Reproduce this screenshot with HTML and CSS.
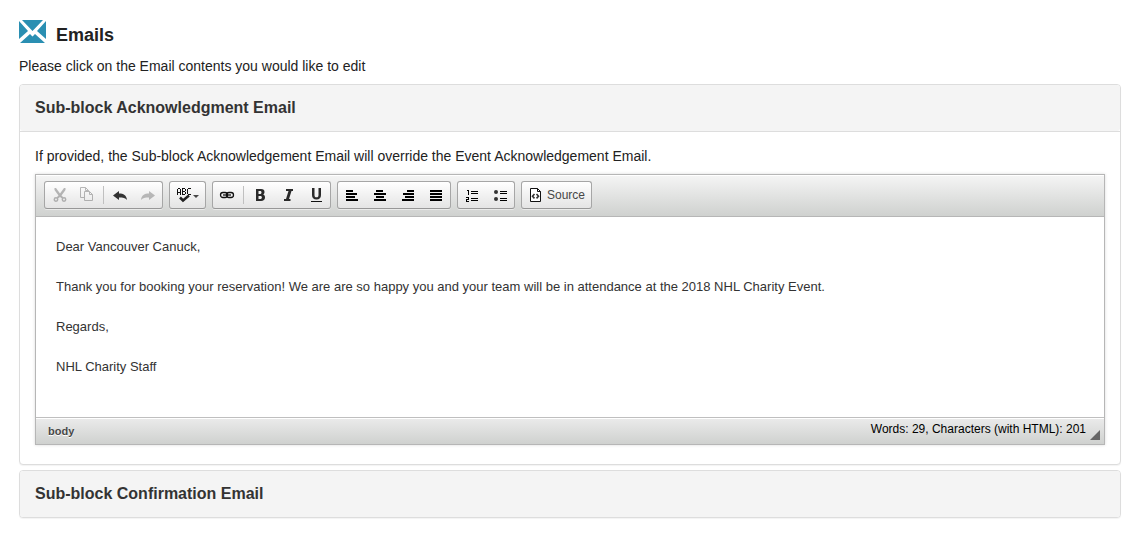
FILE: index.html
```html
<!DOCTYPE html>
<html lang="en">
<head>
    <meta charset="UTF-8">
    <meta name="viewport" content="width=device-width, initial-scale=1.0">
    <title>Emails</title>
    <link rel="stylesheet" href="styles.css">
</head>
<body>
    <header class="page-header">
        <svg class="mail-icon" width="28" height="24" viewBox="0 0 28 24" aria-hidden="true">
            <path fill="#2a8fb2" d="M4 0h21L14.500 11zM1 1l9 10-9 8zM28 1l-9 10 9 8zM2 23l10-9 2.500 2.500L17 14l10 9z"/>
        </svg>
        <h1 class="page-title">Emails</h1>
    </header>
    <p class="intro">Please click on the Email contents you would like to edit</p>

    <section class="panel">
        <h2 class="panel-heading"><button type="button" class="panel-toggle" aria-expanded="true">Sub-block Acknowledgment Email</button></h2>
        <div class="panel-body">
            <p class="hint">If provided, the Sub-block Acknowledgement Email will override the Event Acknowledgement Email.</p>
            <div class="editor">
                <div class="toolbar" role="toolbar" aria-label="Editor toolbar">
                    <div class="tool-group">
                        <button type="button" class="tool" aria-label="Cut" disabled>
                            <svg width="16" height="16" viewBox="0 0 16 16">
                                <path fill="#222" d="M3.500 1h1.500l4 5.500L13 1h1.500v2L10.500 8.500l2 2-1.500 1-2-1.500-2 1.500-1.500-1 2-2L3.500 3z"/>
                                <circle cx="5" cy="12.500" r="1.700" fill="none" stroke="#222" stroke-width="1.500"/>
                                <circle cx="13" cy="12.500" r="1.700" fill="none" stroke="#222" stroke-width="1.500"/>
                            </svg>
                        </button>
                        <button type="button" class="tool" aria-label="Copy" disabled>
                            <svg width="16" height="16" viewBox="0 0 16 16" fill="none" stroke="#222">
                                <path d="M5.500 10.500h-4v-10h5l3 3v1M6.500 .5v3h3"/>
                                <path d="M5.500 4.500h5l3 3v6h-8zM10.500 4.500v3h3"/>
                            </svg>
                        </button>
                        <span class="separator"></span>
                        <button type="button" class="tool" aria-label="Undo">
                            <svg width="16" height="16" viewBox="0 0 16 16"><path fill="#333" d="M1 8.500L7 4v2.500c4.500 0 7.500 1.500 8 6.500-1.500-2-4-2.500-8-2.500V13z"/></svg>
                        </button>
                        <button type="button" class="tool" aria-label="Redo" disabled>
                            <svg width="16" height="16" viewBox="0 0 16 16"><path fill="#333" d="M15 8.500L9 4v2.500c-4.500 0-7.500 1.500-8 6.500 1.500-2 4-2.500 8-2.500V13z"/></svg>
                        </button>
                    </div>
                    <div class="tool-group">
                        <button type="button" class="tool tool-menu" aria-label="Spell check as you type">
                            <svg width="16" height="16" viewBox="0 0 16 16">
                                <path fill="#111" shape-rendering="crispEdges" d="M2 1h2v1H2zM1 2h1v6H1zM4 2h1v6H4zM2 5h2v1H2zM6 1h3v1H6zM6 2h1v6H6zM9 2h1v2H9zM7 4h2v1H7zM9 5h1v2H9zM7 7h2v1H7zM12 1h3v1h-3zM11 2h1v5h-1zM12 7h3v1h-3z"/>
                                <path fill="none" stroke="#222" stroke-width="2.500" d="M4 10.500l3 3 6-5"/>
                            </svg>
                            <span class="arrow"></span>
                        </button>
                    </div>
                    <div class="tool-group">
                        <button type="button" class="tool" aria-label="Link">
                            <svg width="16" height="16" viewBox="0 0 16 16" fill="none" stroke="#111">
                                <rect x="1.500" y="5.500" width="7" height="5" rx="2.500" stroke-width="1.300"/>
                                <rect x="7.500" y="5.500" width="7" height="5" rx="2.500" stroke-width="1.300"/>
                                <path stroke-width="1.300" d="M4 8h8"/>
                            </svg>
                        </button>
                        <span class="separator"></span>
                        <button type="button" class="tool" aria-label="Bold">
                            <svg width="16" height="16" viewBox="0 0 16 16"><path fill="#2a2a2a" fill-rule="evenodd" d="M4 2h5c2.500 0 3.500 1.200 3.500 3 0 1.500-.8 2.300-1.500 2.600 1.300.3 2 1.300 2 2.900 0 2.200-1.500 3.500-4 3.500H4zM6.500 4v3H8c1.200 0 1.500-.7 1.500-1.500S9.200 4 8 4zM6.500 9v3h1.700c1.200 0 1.700-.6 1.700-1.500S9.500 9 8.200 9z"/></svg>
                        </button>
                        <button type="button" class="tool" aria-label="Italic">
                            <svg width="16" height="16" viewBox="0 0 16 16"><path fill="#2a2a2a" d="M6 2h7v2h-1.500L9 12h1.500v2H4v-2h2L8.500 4H6z"/></svg>
                        </button>
                        <button type="button" class="tool" aria-label="Underline">
                            <svg width="16" height="16" viewBox="0 0 16 16"><path fill="#2a2a2a" d="M4 1h2.500v7c0 1.700.5 2.300 2 2.300s2-.6 2-2.300V1H13v7c0 2.800-1.500 4.500-4.500 4.500S4 10.800 4 8z"/><path fill="#111" d="M3 14h11v1H3z"/></svg>
                        </button>
                    </div>
                    <div class="tool-group">
                        <button type="button" class="tool" aria-label="Align Left">
                            <svg width="16" height="16" viewBox="0 0 16 16"><path d="M2 3h7v2H2zM2 6h11v2H2zM2 9h9v2H2zM2 12h12v2H2z"/></svg>
                        </button>
                        <button type="button" class="tool" aria-label="Center">
                            <svg width="16" height="16" viewBox="0 0 16 16"><path d="M4 3h7v2H4zM2 6h12v2H2zM4 9h8v2H4zM2 12h12v2H2z"/></svg>
                        </button>
                        <button type="button" class="tool" aria-label="Align Right">
                            <svg width="16" height="16" viewBox="0 0 16 16"><path d="M7 3h7v2H7zM3 6h11v2H3zM5 9h9v2H5zM2 12h12v2H2z"/></svg>
                        </button>
                        <button type="button" class="tool" aria-label="Justify">
                            <svg width="16" height="16" viewBox="0 0 16 16"><path d="M2 3h12v2H2zM2 6h12v2H2zM2 9h12v2H2zM2 12h12v2H2z"/></svg>
                        </button>
                    </div>
                    <div class="tool-group">
                        <button type="button" class="tool" aria-label="Numbered List">
                            <svg width="16" height="16" viewBox="0 0 16 16" shape-rendering="crispEdges"><path d="M3 3h2v5H4V4H3zM2 10h3v3H3v1h2v1H2v-3h2v-1H2zM7 4h7v1H7zM7 6h7v1H7zM7 11h7v1H7zM7 13h7v1H7z"/></svg>
                        </button>
                        <button type="button" class="tool" aria-label="Bulleted List">
                            <svg width="16" height="16" viewBox="0 0 16 16"><circle cx="4" cy="5" r="2" fill="#333"/><circle cx="4" cy="12" r="2" fill="#333"/><path d="M8 4h7v1H8zM8 6h7v1H8zM8 11h7v1H8zM8 13h7v1H8z"/></svg>
                        </button>
                    </div>
                    <div class="tool-group">
                        <button type="button" class="tool tool-source">
                            <svg width="16" height="16" viewBox="0 0 16 16" fill="none" stroke="#111">
                                <path fill="#fff" d="M2.500 1.500h7l3 3v10h-10z"/>
                                <path d="M9.500 1.500v3h3"/>
                                <path stroke="#333" stroke-width="1.600" d="M6.500 7L4.500 9.200l2 2.200M8.500 7l2 2.200-2 2.200"/>
                            </svg>
                            Source
                        </button>
                    </div>
                </div>
                <div class="content" contenteditable="true" role="textbox" aria-multiline="true" aria-label="Email contents" spellcheck="false">
                    <p>Dear Vancouver Canuck,</p>
                    <p>Thank you for booking your reservation! We are are so happy you and your team will be in attendance at the 2018 NHL Charity Event.</p>
                    <p>Regards,</p>
                    <p>NHL Charity Staff</p>
                </div>
                <div class="status-bar">
                    <span class="element-path">body</span>
                    <span class="word-count">Words: 29, Characters (with HTML): 201</span>
                    <span class="resizer"></span>
                </div>
            </div>
        </div>
    </section>

    <section class="panel">
        <h2 class="panel-heading"><button type="button" class="panel-toggle" aria-expanded="false">Sub-block Confirmation Email</button></h2>
    </section>
</body>
</html>
```
FILE: styles.css
```css
* {
    box-sizing: border-box;
}

body {
    margin: 0;
    padding: 20px 19px;
    background: #ffffff;
    color: #222222;
    font-family: "Liberation Sans", Arial, sans-serif;
    font-size: 14px;
    line-height: 20px;
}

h1, h2, p {
    margin: 0;
}

.page-header {
    display: flex;
    align-items: flex-start;
    gap: 10px;
    margin-left: -1px;
}

.page-title {
    padding-top: 4px;
    font-size: 18px;
    line-height: 22px;
}

.intro {
    margin: 10px 0 8px;
}

.panel {
    border: 1px solid #dddddd;
    border-radius: 4px;
    background: #ffffff;
    box-shadow: 0 1px 1px rgba(0, 0, 0, 0.05);
    margin-bottom: 5px;
}

.panel-heading {
    background: #f4f4f4;
    border-radius: 3px;
}

.panel-toggle {
    display: block;
    width: 100%;
    padding: 12px 15px;
    border: none;
    background: none;
    color: #333333;
    font: bold 16px/22px "Liberation Sans", Arial, sans-serif;
    text-align: left;
    cursor: pointer;
}

.panel-body {
    padding: 14px 15px 19px;
    border-top: 1px solid #dddddd;
}

.hint {
    margin-bottom: 8px;
}

.editor {
    border: 1px solid #b6b6b6;
    box-shadow: 0 0 3px rgba(0, 0, 0, 0.15);
}

.toolbar {
    display: flex;
    flex-wrap: wrap;
    gap: 6px;
    padding: 6px 8px 7px;
    border-bottom: 1px solid #b6b6b6;
    background: linear-gradient(to bottom, #f5f5f5, #cfd1cf);
    box-shadow: 0 1px 0 #ffffff inset;
}

.tool-group {
    display: flex;
    align-items: center;
    border: 1px solid #a6a6a6;
    border-bottom-color: #979797;
    border-radius: 3px;
    background: linear-gradient(to bottom, #ffffff, #e4e4e4);
    box-shadow: 0 1px 0 rgba(255, 255, 255, 0.5), 0 0 2px rgba(255, 255, 255, 0.15) inset;
}

.tool {
    display: flex;
    align-items: center;
    height: 26px;
    padding: 0 6px;
    border: none;
    background: none;
    color: #474747;
    font: 12px/16px "Liberation Sans", Arial, sans-serif;
    cursor: default;
}

.tool:disabled svg {
    opacity: 0.3;
}

.tool-source {
    gap: 3px;
}

.arrow {
    margin: 2px 0 0 1px;
    border: 3px solid transparent;
    border-top-color: #474747;
    border-bottom: none;
}

.separator {
    width: 1px;
    height: 18px;
    margin: 0 2px;
    background: #c0c0c0;
}

.content {
    min-height: 200px;
    padding: 20px;
    color: #333333;
    font-size: 13px;
    outline: none;
}

.content p {
    margin-bottom: 20px;
}

.status-bar {
    display: flex;
    align-items: flex-start;
    height: 27px;
    padding: 3px 4px 4px 12px;
    border-top: 1px solid #bfbfbf;
    background: linear-gradient(to bottom, #ebebeb, #cfd1cf);
    box-shadow: 0 1px 0 #ffffff inset;
    font-size: 12px;
    line-height: 16px;
}

.element-path {
    padding-top: 2px;
    color: #484848;
    font-size: 11px;
    font-weight: bold;
    text-shadow: 0 1px 0 #ffffff;
}

.word-count {
    margin-left: auto;
    color: #000000;
}

.resizer {
    align-self: flex-end;
    margin-left: 4px;
    border: 5px solid #666666;
    border-top-color: transparent;
    border-left-color: transparent;
}
```
